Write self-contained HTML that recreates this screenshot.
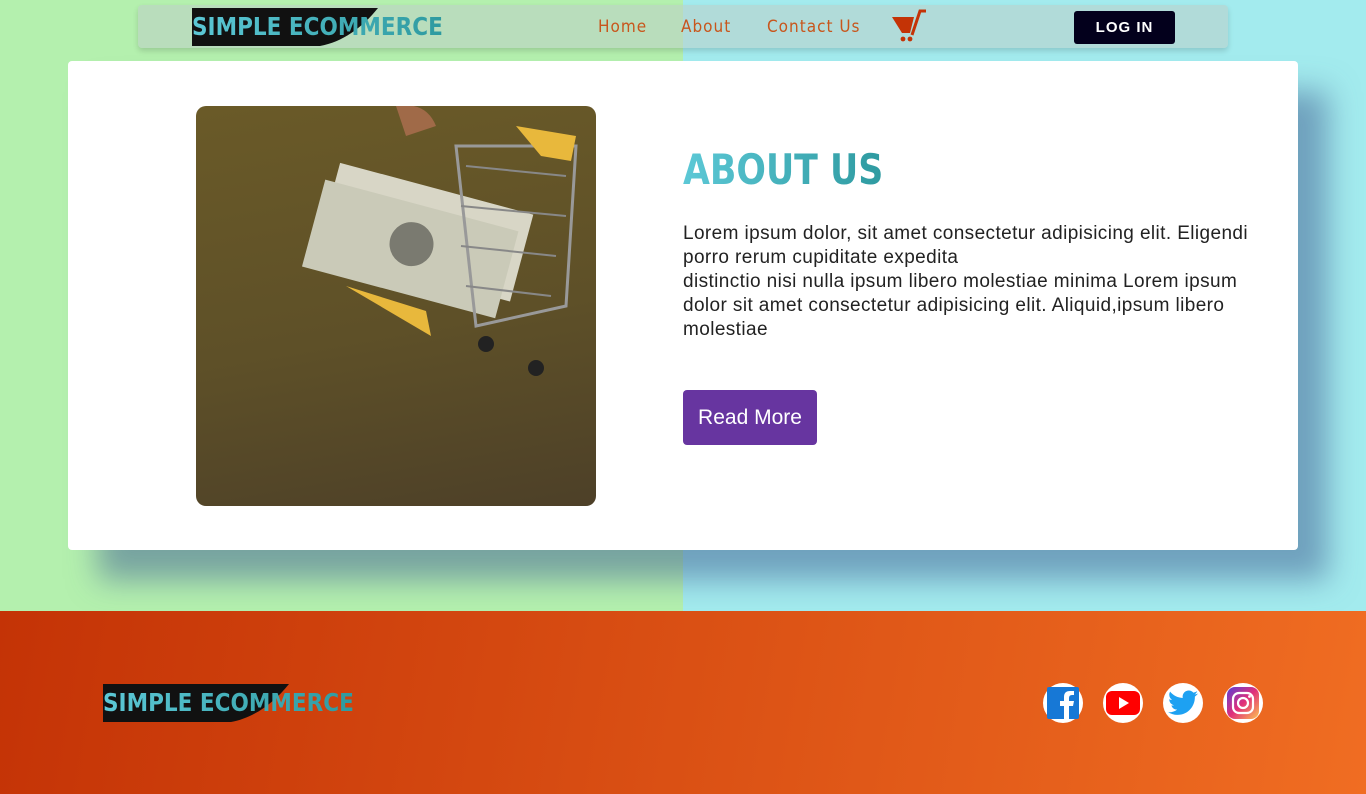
<!DOCTYPE html>
<html><head><style>
*{margin:0;padding:0;box-sizing:border-box}
body{width:1366px;height:794px;overflow:hidden;font-family:"Liberation Sans",sans-serif;position:relative;background:linear-gradient(90deg,#b4f0ae 0 683px,#a3ebee 683px)}
.nav{position:absolute;left:138px;top:5px;width:1090px;height:43px;background:rgba(190,205,200,.55);border-radius:4px;box-shadow:0 3px 6px rgba(0,0,0,.15)}
.logo{position:absolute;height:38px}
.logo .blk{position:absolute;left:0;top:0;width:186px;height:38px;background:#111;clip-path:path('M0 0 H186 C170 20 150 34 128 38 H0 Z')}
.logo span{position:absolute;left:0;top:4px;font:bold 25px "DejaVu Sans Condensed",sans-serif;transform:scaleX(.96);transform-origin:left;background:linear-gradient(90deg,#5cc8d6,#2e9aa0);-webkit-background-clip:text;color:transparent;white-space:nowrap}
.nav a{position:absolute;top:12px;font:17px "DejaVu Sans Condensed",sans-serif;color:#c8561c;letter-spacing:1px}
.login{position:absolute;left:936px;top:6px;width:101px;height:33px;background:#03001c;color:#fff;border-radius:3px;font:bold 15px "Liberation Sans",sans-serif;letter-spacing:1px;text-align:center;line-height:33px}
.card{position:absolute;left:68px;top:61px;width:1230px;height:489px;background:#fff;border-radius:4px;box-shadow:30px 30px 30px rgba(70,100,150,.55)}
.img{position:absolute;left:128px;top:45px;width:400px;height:400px;border-radius:10px;overflow:hidden;background:linear-gradient(170deg,#6a5a28 0%,#5e5028 55%,#4d4028 100%)}
h1{position:absolute;left:615px;top:84px;font:bold 42px "DejaVu Sans Condensed",sans-serif;transform:scaleX(.92);transform-origin:left;background:linear-gradient(90deg,#5cc8d6,#2e9aa0);-webkit-background-clip:text;color:transparent;white-space:nowrap}
p{position:absolute;left:615px;top:161px;width:585px;font-size:19px;line-height:24px;color:#222;letter-spacing:.4px}
.btn{position:absolute;left:615px;top:329px;width:134px;height:55px;background:#6735a0;color:#fff;border-radius:4px;font-size:21px;text-align:center;line-height:55px}
.foot{position:absolute;left:0;top:611px;width:1366px;height:183px;background:linear-gradient(100deg,#c43306,#f06d22)}
.soc{position:absolute;top:72px;width:40px;height:40px;border-radius:50%;background:#fff;display:flex;align-items:center;justify-content:center}
</style></head><body>
<div class="nav">
 <div class="logo" style="left:54px;top:3px"><div class="blk"></div><span>SIMPLE ECOMMERCE</span></div>
 <a style="left:460px">Home</a><a style="left:543px">About</a><a style="left:629px">Contact Us</a>
 <svg style="position:absolute;left:752px;top:4px" width="38" height="34" viewBox="0 0 38 34"><path d="M2 8 H24 L20 24 H12 Z" fill="#c43306"/><path d="M22 26 L30 2 H36" stroke="#c43306" stroke-width="3" fill="none"/><circle cx="13" cy="30" r="2.4" fill="#c43306"/><circle cx="20" cy="30" r="2.4" fill="#c43306"/></svg>
 <div class="login">LOG IN</div>
</div>
<div class="card">
 <div class="img">
  <svg width="400" height="400" viewBox="0 0 400 400">
   <path d="M200 0 Q230 -5 240 20 L210 30 Z" fill="#a06a48"/>
   <g transform="rotate(15 220 160)"><rect x="120" y="80" width="200" height="90" fill="#d8d6c6"/><rect x="110" y="100" width="200" height="90" fill="#cacab8"/><circle cx="210" cy="140" r="22" fill="#7a7a70"/></g>
   <path d="M260 40 L380 40 L370 200 L280 220 Z" fill="none" stroke="#999" stroke-width="3"/>
   <path d="M270 60 L370 70 M265 100 L370 110 M265 140 L360 150 M270 180 L355 190" stroke="#888" stroke-width="2"/>
   <path d="M320 20 L380 30 L375 55 L345 50 Z" fill="#e8b83c"/>
   <path d="M150 180 L230 205 L235 230 Z" fill="#e8b83c"/>
   <circle cx="290" cy="238" r="8" fill="#222"/><circle cx="340" cy="262" r="8" fill="#222"/>
  </svg>
 </div>
 <h1>ABOUT US</h1>
 <p>Lorem ipsum dolor, sit amet consectetur adipisicing elit. Eligendi porro rerum cupiditate expedita<br>distinctio nisi nulla ipsum libero molestiae minima Lorem ipsum dolor sit amet consectetur adipisicing elit. Aliquid,ipsum libero molestiae</p>
 <div class="btn">Read More</div>
</div>
<div class="foot">
 <div class="logo" style="left:103px;top:73px"><div class="blk"></div><span>SIMPLE ECOMMERCE</span></div>
 <div class="soc" style="left:1043px"><svg width="34" height="34" viewBox="0 0 34 34"><rect x="1" y="1" width="32" height="32" rx="2" fill="#1778d6"/><path d="M23 34 V20 H27 L28 15 H23 V12 Q23 9 26 9 H28 V5 H24 Q18 5 18 11 V15 H14 V20 H18 V34 Z" fill="#fff"/></svg></div>
 <div class="soc" style="left:1103px"><svg width="34" height="24" viewBox="0 0 34 24"><rect width="34" height="24" rx="6" fill="#f00"/><path d="M13 6 L23 12 L13 18 Z" fill="#fff"/></svg></div>
 <div class="soc" style="left:1163px"><svg width="30" height="26" viewBox="0 0 24 20"><path d="M24 2.4c-.9.4-1.8.6-2.8.8 1-.6 1.8-1.6 2.2-2.7-1 .6-2 1-3.1 1.2C19.4.7 18.1 0 16.6 0c-2.7 0-4.9 2.2-4.900 4.9 0 .4 0 .8.1 1.1C7.7 5.8 4.1 3.9 1.7.9c-.4.7-.7 1.6-.7 2.5 0 1.7.9 3.2 2.2 4.1-.8 0-1.6-.2-2.2-.6v.1c0 2.4 1.7 4.4 3.9 4.8-.4.1-.8.2-1.3.2-.3 0-.6 0-.9-.1.6 2 2.4 3.4 4.6 3.4-1.7 1.3-3.8 2.1-6.1 2.1-.4 0-.8 0-1.2-.1 2.2 1.4 4.8 2.2 7.5 2.2 9.1 0 14-7.5 14-14v-.6c1-.7 1.8-1.6 2.5-2.5z" fill="#1da1f2"/></svg></div>
 <div class="soc" style="left:1223px"><svg width="32" height="32" viewBox="0 0 32 32"><defs><linearGradient id="ig" x1="0" y1="0" x2="1" y2="1"><stop offset="0" stop-color="#5b3dd6"/><stop offset=".5" stop-color="#e0307a"/><stop offset="1" stop-color="#fdc250"/></linearGradient></defs><rect width="32" height="32" rx="8" fill="url(#ig)"/><rect x="6" y="6" width="20" height="20" rx="6" fill="none" stroke="#fff" stroke-width="2.2"/><circle cx="16" cy="16" r="5" fill="none" stroke="#fff" stroke-width="2.2"/><circle cx="22.5" cy="9.5" r="1.4" fill="#fff"/></svg></div>
</div>
</body></html>
